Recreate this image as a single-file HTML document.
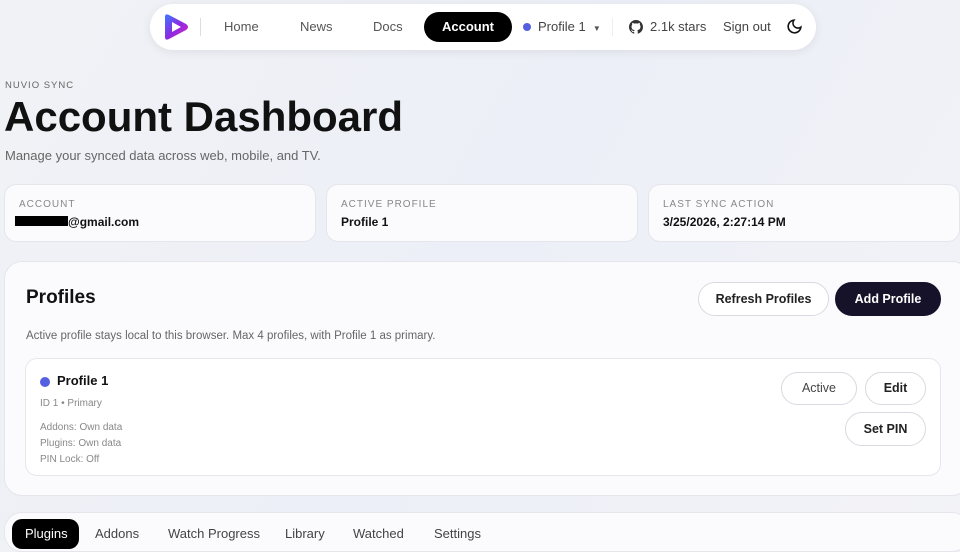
<!DOCTYPE html>
<html><head><meta charset="utf-8"><style>
*{box-sizing:border-box;margin:0;padding:0}
body{width:960px;height:540px;overflow:hidden;font-family:"Liberation Sans",sans-serif;background:linear-gradient(120deg,#f1f2f6 0%,#eceff7 50%,#f3f3f7 100%);color:#111;position:relative}
.abs{position:absolute}
.nav{left:150px;top:4px;width:666px;height:46px;background:#fff;border-radius:23px;box-shadow:0 2px 10px rgba(0,0,0,.08)}
.nav span{position:absolute;top:15px;font-size:13px;color:#555}
.card{background:#fbfbfd;border:1px solid #e4e6ec;border-radius:12px}
.lbl{font-size:10px;letter-spacing:1px;color:#888}
.val{font-size:12px;font-weight:bold;color:#111}
.btn{position:absolute;border:1px solid #d8dae0;border-radius:18px;background:#fff;font-size:12.5px;font-weight:bold;text-align:center;color:#222}
.small{font-size:10px;color:#888}
.tab{position:absolute;top:526px;font-size:13px;color:#444}
</style></head><body>
<div class="abs nav">
 <svg class="abs" style="left:12px;top:8px" width="28" height="30" viewBox="0 0 28 30"><defs><linearGradient id="g" x1="0" y1="0" x2="1" y2="1"><stop offset="0" stop-color="#3a7bff"/><stop offset=".5" stop-color="#8a2be2"/><stop offset="1" stop-color="#e020c0"/></linearGradient></defs><path d="M3 5 Q3 1 7 3 L24 12 Q28 15 24 18 L7 27 Q3 29 3 25 Z" fill="url(#g)"/><path d="M10 10 L19 15 L10 20 Z" fill="#fff"/></svg>
 <div class="abs" style="left:50px;top:14px;width:1px;height:18px;background:#ddd"></div>
 <span style="left:74px">Home</span><span style="left:150px">News</span><span style="left:223px">Docs</span>
 <div class="abs" style="left:274px;top:8px;width:88px;height:30px;background:#000;border-radius:15px;color:#fff;font-size:13px;font-weight:bold;text-align:center;line-height:30px">Account</div>
 <div class="abs" style="left:373px;top:19px;width:8px;height:8px;border-radius:50%;background:#5560e0"></div>
 <span style="left:388px;color:#444">Profile 1 &nbsp;<span style="position:static;font-size:8px">▼</span></span>
 <div class="abs" style="left:462px;top:14px;width:1px;height:18px;background:#eee"></div>
 <svg class="abs" style="left:479px;top:16px" width="14" height="14" viewBox="0 0 16 16"><path fill="#333" d="M8 0C3.6 0 0 3.6 0 8c0 3.5 2.3 6.5 5.5 7.6.4.1.5-.2.5-.4v-1.4c-2.2.5-2.7-1-2.7-1-.4-.9-.9-1.200-.9-1.2-.7-.5.1-.5.1-.5.8.1 1.2.8 1.2.8.7 1.2 1.9.9 2.3.7.1-.5.3-.9.5-1.1-1.8-.2-3.6-.9-3.6-4 0-.9.3-1.6.8-2.1-.1-.2-.4-1 .1-2.1 0 0 .7-.2 2.2.8.6-.2 1.3-.3 2-.3s1.4.1 2 .3c1.5-1 2.2-.8 2.2-.8.4 1.1.2 1.9.1 2.1.5.6.8 1.3.8 2.1 0 3.1-1.9 3.700-3.6 3.9.3.3.5.8.5 1.5v2.2c0 .2.1.5.6.4C13.7 14.5 16 11.5 16 8c0-4.4-3.6-8-8-8z"/></svg>
 <span style="left:500px;color:#444">2.1k stars</span><span style="left:573px;color:#444">Sign out</span>
 <svg class="abs" style="left:636px;top:14px" width="17" height="17" viewBox="0 0 24 24"><path d="M21 12.8A9 9 0 1 1 11.2 3a7 7 0 0 0 9.8 9.8z" fill="none" stroke="#111" stroke-width="2.2"/></svg>
</div>
<div class="abs lbl" style="left:5px;top:80px;font-size:9.5px;color:#666">NUVIO SYNC</div>
<div class="abs" style="left:4px;top:93px;font-size:42px;font-weight:bold;letter-spacing:0">Account Dashboard</div>
<div class="abs" style="left:5px;top:148px;font-size:13px;color:#666">Manage your synced data across web, mobile, and TV.</div>
<div class="abs card" style="left:4px;top:184px;width:312px;height:58px"><div class="abs lbl" style="left:14px;top:14px">ACCOUNT</div><div class="abs" style="left:10px;top:31px;width:53px;height:10px;background:#000"></div><div class="abs val" style="left:63px;top:30px">@gmail.com</div></div>
<div class="abs card" style="left:326px;top:184px;width:312px;height:58px"><div class="abs lbl" style="left:14px;top:14px">ACTIVE PROFILE</div><div class="abs val" style="left:14px;top:30px">Profile 1</div></div>
<div class="abs card" style="left:648px;top:184px;width:312px;height:58px"><div class="abs lbl" style="left:14px;top:14px">LAST SYNC ACTION</div><div class="abs val" style="left:14px;top:30px">3/25/2026, 2:27:14 PM</div></div>
<div class="abs card" style="left:4px;top:261px;width:966px;height:235px;border-radius:18px">
 <div class="abs" style="left:21px;top:25px;font-size:19px;font-weight:bold">Profiles</div>
 <div class="abs" style="left:21px;top:68px;font-size:11.5px;color:#666">Active profile stays local to this browser. Max 4 profiles, with Profile 1 as primary.</div>
 <div class="btn" style="left:693px;top:20px;width:131px;height:34px;line-height:32px">Refresh Profiles</div>
 <div class="btn" style="left:830px;top:20px;width:106px;height:34px;line-height:32px;background:#15122a;color:#fff;border-color:#15122a">Add Profile</div>
 <div class="abs" style="left:20px;top:96px;width:916px;height:118px;background:#fff;border:1px solid #e6e7ec;border-radius:12px">
  <div class="abs" style="left:14px;top:18px;width:10px;height:10px;border-radius:50%;background:#5560e0"></div>
  <div class="abs" style="left:31px;top:14px;font-size:13px;font-weight:bold">Profile 1</div>
  <div class="abs small" style="left:14px;top:39px">ID 1 • Primary</div>
  <div class="abs small" style="left:14px;top:61px;line-height:16px">Addons: Own data<br>Plugins: Own data<br>PIN Lock: Off</div>
  <div class="btn" style="left:755px;top:13px;width:76px;height:33px;line-height:31px;font-weight:normal;color:#444">Active</div>
  <div class="btn" style="left:839px;top:13px;width:61px;height:33px;line-height:31px">Edit</div>
  <div class="btn" style="left:819px;top:53px;width:81px;height:34px;line-height:32px">Set PIN</div>
 </div>
</div>
<div class="abs card" style="left:4px;top:512px;width:966px;height:40px;border-radius:18px"></div>
<div class="abs" style="left:12px;top:519px;width:67px;height:30px;background:#000;border-radius:10px"></div>
<div class="tab" style="left:25px;color:#fff">Plugins</div>
<div class="tab" style="left:95px">Addons</div><div class="tab" style="left:168px">Watch Progress</div><div class="tab" style="left:285px">Library</div><div class="tab" style="left:353px">Watched</div><div class="tab" style="left:434px">Settings</div>
</body></html>
